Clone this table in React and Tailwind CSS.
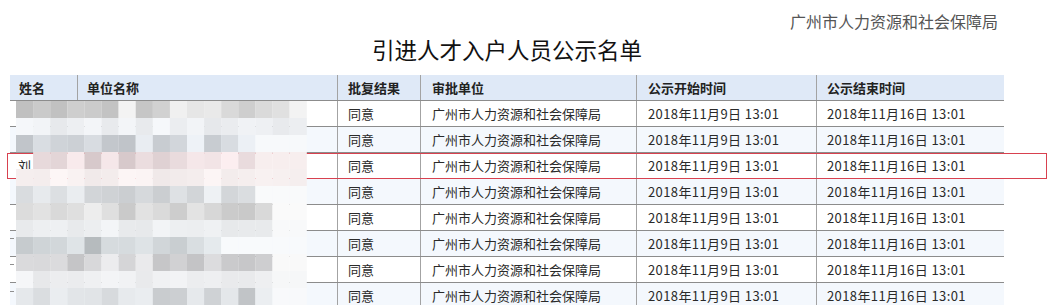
import React from "react";

const cols = "grid grid-cols-[67px_260px_83px_216px_180px_188px]";

const rows = [
  { name: "" },
  { name: "" },
  { name: "刘", marked: true },
  { name: "" },
  { name: "" },
  { name: "" },
  { name: "" },
  { name: "" },
];

// pixelated (blurred) names / units, 17px blocks
const mosaicRows = [
  { len: 17, base: 192, spread: 52, tint: [0, 0, 0], tail: "#f4f4f4" },
  { len: 17, base: 230, spread: 16, tint: [0, 2, 5], tail: "#f3f4f6" },
  { len: 14, base: 190, spread: 48, tint: [0, 4, 9], tail: "#f7f9fb" },
  { len: 14, base: 192, spread: 38, tint: [22, 8, 10], tail: "#f7eeee", skipFirst: true },
  { len: 17, base: 228, spread: 14, tint: [12, 5, 5], tail: "#f5ecec" },
  { len: 14, base: 200, spread: 38, tint: [0, 3, 6], tail: "#f9fafb" },
  { len: 15, base: 190, spread: 48, tint: [0, 0, 0], tail: "#fafafa" },
  { len: 15, base: 230, spread: 14, tint: [0, 2, 4], tail: "#f8f9fa" },
  { len: 12, base: 182, spread: 48, tint: [0, 5, 8], tail: "#f8fafc" },
  { len: 15, base: 195, spread: 42, tint: [0, 0, 2], tail: "#f9f9f9" },
  { len: 15, base: 231, spread: 14, tint: [0, 1, 3], tail: "#f6f7f8" },
  { len: 15, base: 190, spread: 48, tint: [0, 3, 6], tail: "#f8f9fb" },
];

const noise = (r, c) => {
  const n = Math.sin(r * 12.9898 + c * 78.233) * 43758.5453;
  return n - Math.floor(n);
};

const clamp = (v) => Math.max(0, Math.min(255, Math.round(v)));

function Mosaic() {
  const rects = [];
  mosaicRows.forEach((row, r) => {
    for (let c = 0; c < 17; c++) {
      if (row.skipFirst && c === 0) continue;
      let fill = row.tail;
      if (c < row.len) {
        const v = row.base + noise(r, c) * row.spread;
        fill = `rgb(${clamp(v + row.tint[0])},${clamp(v + row.tint[1])},${clamp(v + row.tint[2])})`;
      }
      rects.push(
        <rect key={r + "-" + c} x={6 + c * 17.1} y={r * 17} width={17.2} height={17.2} fill={fill} />
      );
    }
  });
  return (
    <svg
      className="absolute left-0 top-[26px] pointer-events-none"
      width="300"
      height="210"
      viewBox="0 0 300 210"
    >
      {rects}
      {[51, 137, 163, 190, 217].map((y) => (
        <line key={y} x1="0" x2="4" y1={y + 0.5} y2={y + 0.5} stroke="#8f8f8f" strokeWidth="1" />
      ))}
    </svg>
  );
}

export default function App() {
  return (
    <div className="w-[1058px] bg-white font-['Noto_Sans_CJK_SC',sans-serif]">
      <div className="ml-[10px] w-[994px]">
        <div className="pt-[11px] pr-[6px] text-right text-[16px] leading-[20px] text-[#555]">
          广州市人力资源和社会保障局
        </div>
        <h1 className="mt-[3px] text-center text-[22.5px] leading-[30px] text-[#111]">
          引进人才入户人员公示名单
        </h1>

        <div className="relative mt-[11px]">
          <div className={`${cols} h-[26px] bg-[#dfe9f7] border-b border-[#8c8c8c] text-[13px] font-bold text-[#222]`}>
            <div className="flex items-center pl-[9px]">姓名</div>
            <div className="flex items-center pl-[9px] border-l border-[#a3a3a3]">单位名称</div>
            <div className="flex items-center pl-[10px] border-l border-[#a3a3a3]">批复结果</div>
            <div className="flex items-center pl-[11px] border-l border-[#a3a3a3]">审批单位</div>
            <div className="flex items-center pl-[11px] border-l border-[#a3a3a3]">公示开始时间</div>
            <div className="flex items-center pl-[10px] border-l border-[#a3a3a3]">公示结束时间</div>
          </div>

          {rows.map((r, i) => (
            <div
              key={i}
              className={`${cols} relative h-[26px] border-b border-[#8c8c8c] text-[13px] text-[#2a2a2a] ${
                i % 2 === 1 ? "bg-[#f4f8fd]" : "bg-white"
              }`}
            >
              <div className="flex items-center pl-[8px]">{r.name}</div>
              <div className="border-l border-[#a3a3a3]"></div>
              <div className="flex items-center pl-[10px] border-l border-[#a3a3a3]">同意</div>
              <div className="flex items-center pl-[11px] border-l border-[#a3a3a3]">广州市人力资源和社会保障局</div>
              <div className="flex items-center pl-[11px] border-l border-[#a3a3a3] tracking-[0.4px]">2018年11月9日 13:01</div>
              <div className="flex items-center pl-[10px] border-l border-[#a3a3a3] tracking-[0.4px]">2018年11月16日 13:01</div>
              {r.marked && (
                <div className="absolute -left-[3px] top-0 -bottom-px -right-[43px] border border-[#d8414f] pointer-events-none"></div>
              )}
            </div>
          ))}

          <Mosaic />
        </div>
      </div>
    </div>
  );
}
